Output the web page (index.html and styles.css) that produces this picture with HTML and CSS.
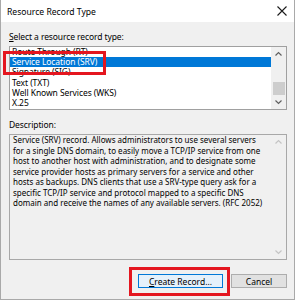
FILE: index.html
```html
<!DOCTYPE html>
<html>
<head>
<meta charset="utf-8">
<link rel="stylesheet" href="styles.css">
</head>
<body>
<div class="window">
  <div class="titlebar">
    <span class="title">Resource Record Type</span>
    <svg class="close" width="10" height="10" viewBox="0 0 10 10"><path d="M0.5 0.5L9.5 9.5M9.5 0.5L0.5 9.5" stroke="#1a1a1a" stroke-width="1.1" fill="none"/></svg>
  </div>
  <div class="content">
    <div class="label first"><u>S</u>elect a resource record type:</div>
    <div class="listbox">
      <div class="items">
        <div class="item">Route Through (RT)</div>
        <div class="item selected">Service Location (SRV)</div>
        <div class="item">Signature (SIG)</div>
        <div class="item">Text (TXT)</div>
        <div class="item">Well Known Services (WKS)</div>
        <div class="item">X.25</div>
      </div>
      <div class="vscroll">
        <svg class="arrow" width="15" height="14" viewBox="0 0 15 14"><path d="M4.5 8.5L7.5 5.5L10.5 8.5" stroke="#606060" stroke-width="1.2" fill="none"/></svg>
        <div class="track"><div class="thumb"></div></div>
        <svg class="arrow" width="15" height="14" viewBox="0 0 15 14"><path d="M4.5 5.5L7.5 8.5L10.5 5.5" stroke="#606060" stroke-width="1.2" fill="none"/></svg>
      </div>
    </div>
    <div class="label second">Description:</div>
    <div class="descbox">
      <div class="desctext">Service (SRV) record. Allows administrators to use several servers<br>for a single DNS domain, to easily move a TCP/IP service from one<br>host to another host with administration, and to designate some<br>service provider hosts as primary servers for a service and other<br>hosts as backups. DNS clients that use a SRV-type query ask for a<br>specific TCP/IP service and protocol mapped to a specific DNS<br>domain and receive the names of any available servers. (RFC 2052)</div>
      <div class="vscroll disabled">
        <svg class="arrow" width="15" height="14" viewBox="0 0 15 14"><path d="M4.5 8.5L7.5 5.5L10.5 8.5" stroke="#c4c4c4" stroke-width="1.2" fill="none"/></svg>
        <div class="track"></div>
        <svg class="arrow" width="15" height="14" viewBox="0 0 15 14"><path d="M4.5 5.5L7.5 8.5L10.5 5.5" stroke="#c4c4c4" stroke-width="1.2" fill="none"/></svg>
      </div>
    </div>
    <div class="buttons">
      <div class="btn default"><u>C</u>reate Record...</div>
      <div class="btn">Cancel</div>
    </div>
  </div>
  <div class="mark mark-list"></div>
  <div class="mark mark-btn"></div>
</div>
</body>
</html>
```
FILE: styles.css
```css
html, body {
  margin: 0;
  padding: 0;
  background: #f0f0f0;
}
.window {
  position: relative;
  width: 295px;
  height: 300px;
  box-sizing: border-box;
  border: 1px solid #a9a9a9;
  border-top: none;
  background: #f0f0f0;
  font-family: "Noto Sans", "Open Sans", sans-serif;
  font-size: 8.5px;
  color: #000;
  overflow: hidden;
}
.titlebar {
  height: 22px;
  background: #fff;
  display: flex;
  align-items: center;
  justify-content: space-between;
  padding: 0 6px 0 6px;
  box-sizing: border-box;
}
.title {
  font-size: 8.6px;
  color: #000;
  margin-top: 1px;
}
.close {
  margin-right: 1px;
}
.content {
  padding: 0 7px 0 8px;
}
.label {
  height: 12px;
  line-height: 12px;
  letter-spacing: -0.1px;
}
.label.first { margin-top: 9px; }
.label.second { margin-top: 9px; }
.listbox {
  margin-top: 3px;
  height: 64px;
  box-sizing: border-box;
  border: 1px solid #a0a0a0;
  background: #fff;
  display: flex;
}
.items {
  flex: 1;
  overflow: hidden;
}
.item {
  height: 10.2px;
  line-height: 10.2px;
  padding-left: 2px;
  white-space: nowrap;
  letter-spacing: -0.08px;
}
.item.selected {
  background: #0078d7;
  color: #fff;
}
.vscroll {
  width: 15px;
  background: #f0f0f0;
  display: flex;
  flex-direction: column;
}
.arrow {
  display: block;
  flex: none;
}
.track {
  flex: 1;
  display: flex;
  flex-direction: column;
  justify-content: flex-end;
  align-items: center;
}
.thumb {
  width: 12px;
  height: 13px;
  background: #cdcdcd;
}
.descbox {
  margin-top: 3px;
  height: 126px;
  box-sizing: border-box;
  border: 1px solid #a8a8a8;
  background: #f0f0f0;
  display: flex;
}
.desctext {
  flex: 1;
  padding: 0 0 0 3px;
  font-size: 8px;
  line-height: 10.5px;
  white-space: nowrap;
}
.buttons {
  margin-top: 14px;
  display: flex;
  justify-content: flex-end;
  gap: 8px;
}
.btn {
  height: 14px;
  box-sizing: border-box;
  border: 1px solid #adadad;
  background: #e1e1e1;
  display: flex;
  align-items: center;
  justify-content: center;
  width: 56px;
}
.btn.default {
  width: 85px;
  background: #e5f1fb;
  border-color: #0078d7;
}
.mark {
  position: absolute;
  border: 3px solid #e4161f;
  box-sizing: border-box;
}
.mark-list {
  left: 2px;
  top: 51px;
  width: 103px;
  height: 24px;
}
.mark-btn {
  left: 128px;
  top: 267px;
  width: 101px;
  height: 29px;
}
```
